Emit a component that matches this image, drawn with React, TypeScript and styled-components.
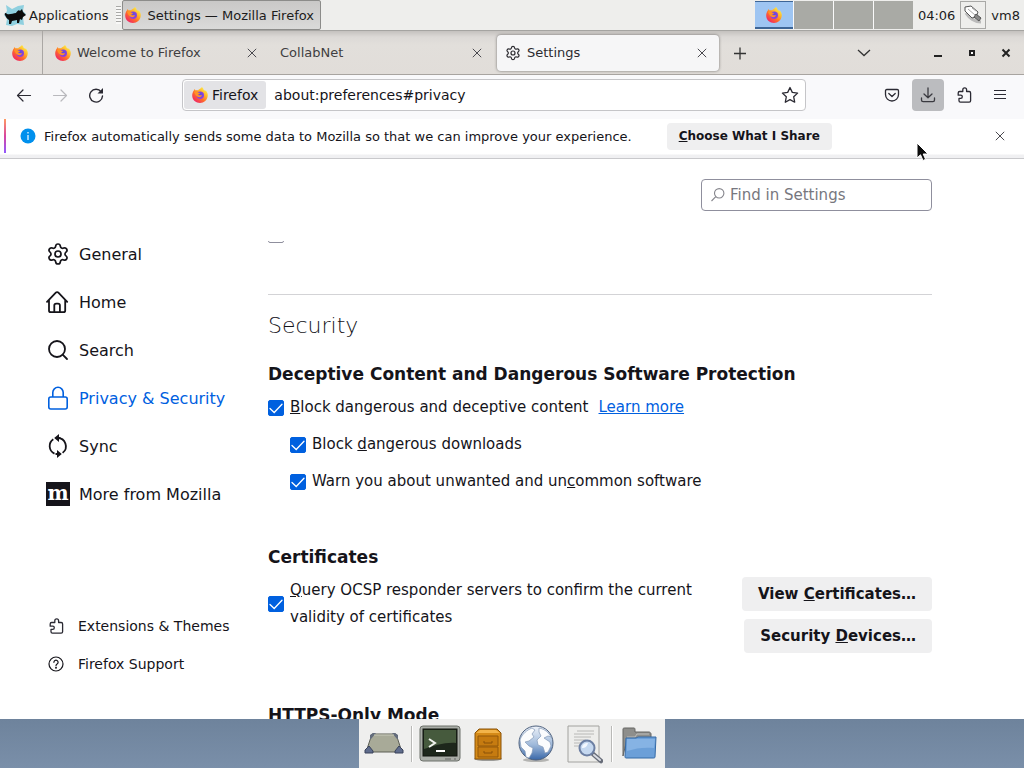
import React from "react";
import styled, { createGlobalStyle } from "styled-components";
import { Settings, Search } from "lucide-react";

const GlobalStyle = createGlobalStyle`
  *, *::before, *::after { box-sizing: border-box; }
  body {
    margin: 0;
    background: #758ba5;
    color: #15141a;
    font-family: "DejaVu Sans", sans-serif;
    font-size: 15px;
  }
  button, input { font-family: inherit; color: inherit; margin: 0; }
  button { border: 0; padding: 0; background: none; }
  svg { display: block; flex: none; }
  h1, h2 { margin: 0; }
`;

/* ---------- desktop ---------- */

const Desktop = styled.div`
  display: flex;
  flex-direction: column;
  height: 100vh;
  overflow: hidden;
`;

const Panel = styled.header`
  display: flex;
  align-items: center;
  height: 31px;
  flex: none;
  padding: 0 4px;
  background: #eeeeec;
  border-bottom: 1px solid #a5a4a1;
  font-size: 13px;
  color: #1c1c1c;
`;

const MenuButton = styled.button`
  display: flex;
  align-items: center;
  gap: 2px;
  font-size: 13px;
`;

const Grip = styled.span`
  width: 5px;
  height: 18px;
  margin: 0 1px 0 8px;
  background: repeating-linear-gradient(#a9a9a7 0 1px, #f8f8f7 1px 3px);
`;

const TaskButton = styled.button`
  display: flex;
  align-items: center;
  gap: 6px;
  height: 30px;
  padding: 0 6px 0 2px;
  background: linear-gradient(#c9c8c7, #dadad9);
  border: 1px solid #8c8c8a;
  border-radius: 2px;
  font-size: 13px;
`;

const Pager = styled.div`
  display: flex;
  gap: 1px;
  margin-left: auto;
  background: #fafafa;
  height: 28px;
`;

const Workspace = styled.button<{ $current?: boolean }>`
  display: grid;
  place-items: center;
  width: ${(p) => (p.$current ? 38 : 39)}px;
  background: ${(p) => (p.$current ? "#9ec5f2" : "#a9aaa5")};
  border-bottom: ${(p) => (p.$current ? "2px solid #3d6596" : "0")};
  border-top: ${(p) => (p.$current ? "1px solid #3d6596" : "0")};
`;

const Clock = styled.time`
  margin: 0 5px;
`;

const TrayButton = styled.button`
  display: grid;
  place-items: center;
  width: 26px;
  height: 28px;
  margin-right: 5px;
  border: 1px solid #a9a9a7;
`;

/* ---------- browser window ---------- */

const Window = styled.main`
  display: flex;
  flex-direction: column;
  flex: 1;
  min-height: 0;
  background: #fff;
`;

const TabBar = styled.div`
  display: flex;
  align-items: center;
  height: 44px;
  flex: none;
  background: linear-gradient(#c4c1be, #dcd9d6 6px, #e2dfdb 14px, #e1ddd9);
  border-bottom: 1px solid #a8a4a0;
`;

const PinnedTab = styled.button`
  display: grid;
  place-items: center;
  align-self: stretch;
  width: 43px;
  padding-right: 3px;
  margin-right: 3px;
  border-right: 1px solid #aaa7a4;
`;

const Tab = styled.div<{ $active?: boolean }>`
  display: flex;
  align-items: center;
  gap: 6px;
  width: 222px;
  height: 36px;
  margin: 0 2px 0 1px;
  padding: 0 7px 0 8px;
  border-radius: 4px;
  font-size: 13px;
  color: ${(p) => (p.$active ? "#2c2b30" : "#403e41")};
  background: ${(p) => (p.$active ? "#f6f6f7" : "none")};
  box-shadow: ${(p) => (p.$active ? "0 0 3px rgba(0, 0, 0, 0.5)" : "none")};
`;

const TabTitle = styled.span`
  flex: 1;
`;

const IconButton = styled.button<{ $size?: number; $pressed?: boolean }>`
  display: grid;
  place-items: center;
  width: ${(p) => p.$size ?? 32}px;
  height: ${(p) => p.$size ?? 32}px;
  border-radius: 4px;
  background: ${(p) => (p.$pressed ? "#bbbcbf" : "none")};
`;

const WindowControls = styled.div`
  display: flex;
  gap: 2px;
  margin-left: auto;
  padding-right: 2px;
`;

const TabListButton = styled(IconButton)`
  margin-right: 40px;
`;

const Toolbar = styled.div`
  display: flex;
  align-items: center;
  height: 42px;
  flex: none;
  padding: 0 8px 2px;
  background: #f9f9fb;
`;

const ButtonGroup = styled.div`
  display: flex;
  gap: 4px;
`;

const UrlBar = styled.div`
  display: flex;
  align-items: center;
  flex: 1;
  max-width: 624px;
  height: 32px;
  margin: 0 auto 0 70px;
  background: #fff;
  border: 1px solid #c5c5c8;
  border-radius: 4px;
`;

const Identity = styled.button`
  display: flex;
  align-items: center;
  gap: 4px;
  height: 28px;
  margin-left: 1px;
  padding: 0 8px;
  border-radius: 3px;
  background: #e3e3e6;
  font-size: 14px;
`;

const Address = styled.input`
  flex: 1;
  min-width: 0;
  padding: 0 8px;
  border: 0;
  outline: 0;
  background: none;
  font-size: 14px;
`;

const Notice = styled.div`
  display: flex;
  align-items: center;
  height: 42px;
  flex: none;
  padding: 2px 8px 5px 4px;
  background: linear-gradient(#f9f9fb 2px, #fff 2px 37px, #f0f0f2 38px);
  border-bottom: 1px solid #c9c9cc;
  font-size: 13px;
`;

const NoticeStripe = styled.span`
  align-self: stretch;
  width: 2px;
  margin-right: 14px;
  background: linear-gradient(#ff9a62, #d8459f 50%, #9059ff);
`;

const NoticeText = styled.span`
  margin: 0 35px 0 8px;
`;

const NoticeButton = styled.button`
  height: 27px;
  padding: 0 12px;
  border-radius: 4px;
  background: #efeff0;
  font-size: 12px;
  font-weight: 700;
`;

const NoticeClose = styled(IconButton)`
  margin-left: auto;
`;

/* ---------- preferences page ---------- */

const Page = styled.div`
  display: flex;
  flex: 1;
  min-height: 0;
`;

const Sidebar = styled.nav`
  display: flex;
  flex-direction: column;
  width: 268px;
  flex: none;
  padding: 71px 0 36px 46px;
`;

const Category = styled.a<{ $selected?: boolean }>`
  display: flex;
  align-items: center;
  gap: 9px;
  height: 48px;
  font-size: 16px;
  text-decoration: none;
  color: ${(p) => (p.$selected ? "#0060df" : "#15141a")};
`;

const FooterLinks = styled.div`
  margin-top: auto;
  padding-left: 2px;
`;

const FooterLink = styled.a`
  display: flex;
  align-items: center;
  gap: 14px;
  height: 38px;
  font-size: 14px;
  text-decoration: none;
  color: #15141a;
`;

const Pane = styled.div`
  display: flex;
  flex-direction: column;
  flex: 1;
  max-width: 664px;
`;

const SearchBox = styled.label`
  display: flex;
  align-items: center;
  align-self: flex-end;
  gap: 4px;
  width: 231px;
  height: 32px;
  flex: none;
  margin: 20px 0 30px;
  padding: 0 8px;
  border: 1px solid #8f8f9d;
  border-radius: 4px;
  color: #7d7d85;
`;

const SearchInput = styled.input`
  flex: 1;
  min-width: 0;
  padding: 0;
  border: 0;
  outline: 0;
  background: none;
  font-size: 15px;
  &::placeholder { color: #77777e; opacity: 1; }
`;

const Scroller = styled.div`
  flex: 1;
  min-height: 0;
  overflow: hidden;
`;

const EarlierSection = styled.div`
  margin-top: -14px;
  padding-bottom: 51px;
  border-bottom: 1px solid #d3d3d6;
`;

const SectionTitle = styled.h1`
  margin: 16px 0 21px;
  font-size: 22px;
  line-height: 30px;
  font-weight: 200;
`;

const Group = styled.section`
  margin-bottom: 50px;
`;

const GroupTitle = styled.h2`
  margin-bottom: 8px;
  font-size: 17px;
  line-height: 24px;
  font-weight: 700;
`;

const Options = styled.div`
  display: flex;
  flex-direction: column;
  gap: 10px;
`;

const OptionRow = styled.div<{ $nested?: boolean }>`
  display: flex;
  align-items: center;
  gap: 10px;
  padding-left: ${(p) => (p.$nested ? 22 : 0)}px;
  line-height: 27px;
`;

const CheckLabel = styled.label`
  display: flex;
  align-items: center;
  gap: 6px;
`;

const CheckBoxCell = styled.span`
  display: grid;
  flex: none;
  & > * { grid-area: 1 / 1; }
  & > svg { pointer-events: none; }
`;

const CheckBox = styled.input`
  appearance: none;
  width: 16px;
  height: 16px;
  border: 1px solid #8f8f9d;
  border-radius: 2px;
  background: #fff;
  &:checked { background: #0060df; border-color: #0060df; }
`;

const Link = styled.a`
  color: #0060df;
`;

const Split = styled.div`
  display: flex;
  align-items: flex-start;
  justify-content: space-between;
  gap: 32px;
`;

const ButtonStack = styled.div`
  display: flex;
  flex-direction: column;
  align-items: flex-end;
  gap: 8px;
  flex: none;
`;

const PrefButton = styled.button`
  height: 34px;
  padding: 0 16px;
  border-radius: 4px;
  background: #efeff0;
  font-size: 15px;
  font-weight: 700;
`;

/* ---------- dock ---------- */

const DockBar = styled.footer`
  display: flex;
  justify-content: center;
  height: 49px;
  flex: none;
  background: linear-gradient(#6e839c, #7a8fa9);
`;

const Dock = styled.div`
  display: flex;
  align-items: center;
  padding: 0 1px;
  background: #efefee;
`;

const DockItem = styled.button`
  display: grid;
  place-items: center;
  width: 48px;
  height: 48px;
`;

const DockSeparator = styled.span`
  width: 2px;
  height: 36px;
  margin: 0 3px;
  border-left: 1px solid #b9b9b7;
  border-right: 1px solid #fff;
`;

const Pointer = styled.svg`
  position: absolute;
  left: 916px;
  top: 142px;
  pointer-events: none;
`;

/* ---------- icons ---------- */

const Fox = ({ size = 16 }: { size?: number }) => (
  <svg width={size} height={size} viewBox="0 0 32 32">
    <defs>
      <linearGradient id="foxBody" x1="0.85" y1="0.1" x2="0.15" y2="0.95">
        <stop offset="0" stopColor="#fff14a" />
        <stop offset="0.3" stopColor="#ffb62a" />
        <stop offset="0.6" stopColor="#ff6a2b" />
        <stop offset="1" stopColor="#ee1f6c" />
      </linearGradient>
      <radialGradient id="foxGlobe" cx="0.5" cy="0.4" r="0.6">
        <stop offset="0" stopColor="#5b4de0" />
        <stop offset="1" stopColor="#9a3fd8" />
      </radialGradient>
    </defs>
    <path
      d="M20 0c2 2 3 4 3.500 6C27 8 28 7 28.500 8c2 3 3.500 6 3 9.500C30.800 26 24 32 16 32S.6 26 .4 17.500C.3 13 2 9 4 6.500L5 4l2.500 3c1.500-.5 3-.5 4.500-.2C14 4 17 4 18 2z"
      fill="url(#foxBody)"
    />
    <circle cx="16.500" cy="16.500" r="7.500" fill="url(#foxGlobe)" />
    <path d="M4 10c3-3 7-3 9-2.500-1.500 1-2 2.500-1.500 3.500l4.500.8c0 2-3 2.200-3.800 3.500 2.300 2.800 6 .5 8 1.200-1 3-5 4.500-8 3.500-4-1-6-5-8.200-10z" fill="#ff9226" />
  </svg>
);

const Close = ({ size = 10 }: { size?: number }) => (
  <svg width={size} height={size} viewBox="0 0 10 10" fill="none" stroke="#4a494f" strokeWidth="1">
    <path d="M.8.8l8.400 8.400M9.200.8L.8 9.200" />
  </svg>
);

const Mouse = () => (
  <svg width="23" height="23" viewBox="0 0 23 23">
    <path d="M2 1l6 4 6-3 6-1-1 6 3 3-3 3 1 8-7-1-5 2-6-1 1-6-3-4 3-4z" fill="#8fd0df" />
    <path d="M1 11c-1-2 1-3 2-1 3 1 6-1 9-1 1-2 3-4 4-2l2-2 1 3 3 3-3 2-1 3-2-1-1 4h-2v-3l-5 1-1 3H5v-4c-2-1-3-3-4-5z" fill="#0b0b0b" />
  </svg>
);

const Cable = () => (
  <svg width="20" height="20" viewBox="0 0 20 20" fill="#fff" stroke="#555" strokeWidth="1">
    <path d="M3 8c3 5 9 9 15 9" fill="none" stroke="#bbb" strokeWidth="3" />
    <path d="M2 2l6-1 7 6-2 5-4 1-7-7z" />
    <path d="M13 9l5 4-2 3-5-4z" fill="#888" />
    <path d="M5 4l7 6M9 3l4 3" stroke="#aaa" />
  </svg>
);

const Back = () => (
  <svg width="16" height="16" viewBox="0 0 16 16" fill="none" stroke="#2b2a33" strokeWidth="1.200" strokeLinecap="round" strokeLinejoin="round">
    <path d="M14.500 8.500H1.500M7 3L1.500 8.500 7 14" />
  </svg>
);

const Forward = () => (
  <svg width="16" height="16" viewBox="0 0 16 16" fill="none" stroke="#b9b9bd" strokeWidth="1.200" strokeLinecap="round" strokeLinejoin="round">
    <path d="M1.500 8.500h13M9 3l5.500 5.500L9 14" />
  </svg>
);

const Reload = () => (
  <svg width="16" height="16" viewBox="0 0 16 16" fill="none" stroke="#2b2a33" strokeWidth="1.400" strokeLinecap="round">
    <path d="M13.200 4.800A6.400 6.400 0 1 0 14.500 9" />
    <path d="M15 1v5.500H9.500z" fill="#2b2a33" stroke="none" />
  </svg>
);

const Star = () => (
  <svg width="18" height="18" viewBox="0 0 18 18" fill="none" stroke="#2b2a33" strokeWidth="1.300" strokeLinejoin="round">
    <path d="M9 1.500l2.300 4.900 5.300.7-3.900 3.700 1 5.400L9 13.600l-4.700 2.600 1-5.400-3.900-3.700 5.300-.7z" />
  </svg>
);

const Pocket = () => (
  <svg width="16" height="16" viewBox="0 0 16 16" fill="none" stroke="#2b2a33" strokeWidth="1.300" strokeLinecap="round" strokeLinejoin="round">
    <path d="M2.800 2.500h10.400c.8 0 1.300.5 1.300 1.300V7.500a6.500 6.500 0 0 1-13 0V3.800c0-.8.500-1.300 1.300-1.300z" />
    <path d="M4.800 6.500L8 9.500l3.200-3" />
  </svg>
);

const Download = () => (
  <svg width="16" height="16" viewBox="0 0 16 16" fill="none" stroke="#3a3a40" strokeWidth="1.300" strokeLinecap="round" strokeLinejoin="round">
    <path d="M8 1v9.500M4 7l4 3.800L12 7M1.500 11v2c0 1 .6 1.600 1.600 1.600h9.800c1 0 1.600-.6 1.600-1.600v-2" />
  </svg>
);

const Puzzle = () => (
  <svg width="16" height="16" viewBox="0 0 16 16" fill="none" stroke="#2b2a33" strokeWidth="1.300" strokeLinejoin="round">
    <path d="M6.800 4.500V2.700a1.900 1.900 0 0 1 3.800 0v1.800h2.600c.9 0 1.400.5 1.400 1.400v7.800c0 .9-.5 1.400-1.400 1.400H4.400c-.9 0-1.400-.5-1.400-1.400v-2.300h1.700a1.600 1.600 0 0 0 0-3.200H2.200V5.900c0-.9.500-1.400 1.400-1.400z" />
  </svg>
);

const Burger = () => (
  <svg width="14" height="14" viewBox="0 0 14 14" stroke="#2b2a33" strokeWidth="1.200">
    <path d="M1 2.500h12M1 6.500h12M1 10.500h12" />
  </svg>
);

const HomeIcon = () => (
  <svg width="24" height="24" viewBox="0 0 24 24" fill="none" stroke="#15141a" strokeWidth="1.800" strokeLinecap="round" strokeLinejoin="round">
    <path d="M1 11.800L9.800 2.600a1.800 1.800 0 0 1 2.600 0L21.200 11.800M3 10v10.500c0 1 .7 1.700 1.700 1.700h12.800c1 0 1.700-.7 1.700-1.700V10" />
    <path d="M8.300 22v-6.500c0-1.200.7-1.900 1.900-1.900h1.800c1.200 0 1.900.7 1.900 1.900V22" />
  </svg>
);

const LockIcon = () => (
  <svg width="24" height="24" viewBox="0 0 24 24" fill="none" stroke="#0060df" strokeWidth="1.600">
    <rect x="2.800" y="11" width="18.400" height="12" rx="2" />
    <path d="M6.800 11V6.500a5.200 5.200 0 0 1 10.400 0V11" />
  </svg>
);

const SyncIcon = () => (
  <svg width="24" height="24" viewBox="0 0 24 24" fill="none" stroke="#15141a" strokeWidth="1.800">
    <path d="M7.300 5.200A8.300 8.300 0 0 0 8.500 19.600M11.500 4A8.300 8.300 0 0 1 16.600 18.900" />
    <path d="M13 0v8L8.200 4zM11 16v8l4.800-4z" fill="#15141a" stroke="none" />
    <path d="M11 20H9.500M13 4h1.500" />
  </svg>
);

const MozillaIcon = () => (
  <svg width="24" height="24" viewBox="0 0 24 24">
    <rect width="24" height="24" fill="#15141a" />
    <text x="12" y="18" textAnchor="middle" fontFamily="DejaVu Serif, serif" fontWeight="700" fontSize="20" fill="#fff">m</text>
  </svg>
);

const HelpIcon = () => (
  <svg width="16" height="16" viewBox="0 0 16 16" fill="none" stroke="#15141a" strokeWidth="1.200" strokeLinecap="round">
    <circle cx="8" cy="8" r="7" />
    <path d="M5.900 6.300a2.100 2.100 0 1 1 3.200 1.800c-.8.5-1.100.8-1.100 1.600" />
    <circle cx="8" cy="11.800" r=".4" fill="#15141a" />
  </svg>
);

const InfoIcon = () => (
  <svg width="16" height="16" viewBox="0 0 16 16">
    <circle cx="8" cy="8" r="7.500" fill="#0090ed" />
    <path d="M8 4v1.500M8 7v5" stroke="#d5efff" strokeWidth="1.400" />
  </svg>
);

const FindIcon = () => (
  <svg width="16" height="16" viewBox="0 0 16 16" fill="none" stroke="#85858c" strokeWidth="1.100">
    <circle cx="9.200" cy="6.300" r="4.700" />
    <path d="M5.800 9.700L1.500 14" />
  </svg>
);

const ShowDesktopIcon = () => (
  <svg width="40" height="24" viewBox="0 0 40 24">
    <path d="M8 2h24l6 18H2z" fill="#a8aa98" stroke="#5c5e55" />
    <path d="M6 7V3l3-2h3l-5 6zM34 7V3l-3-2h-3l5 6z" fill="#636c7c" />
    <path d="M1 21v-3l4-4 4 5v2zM39 21v-3l-4-4-4 5v2z" fill="#5f6c8c" stroke="#3a435a" />
    <path d="M10 3h20" fill="none" stroke="#c8cabb" />
  </svg>
);

const TerminalIcon = () => (
  <svg width="42" height="38" viewBox="0 0 42 38">
    <rect x="1" y="1" width="40" height="35" rx="3" fill="#a9ada7" stroke="#6d716b" />
    <rect x="4" y="4" width="34" height="27" fill="#1d271b" stroke="#10150f" />
    <path d="M5 5h32v13C26 17 15 21 5 24z" fill="#465a3d" />
    <path d="M10 14l6 4-6 4" fill="none" stroke="#f2f4ef" strokeWidth="2" />
    <path d="M17 26h9" stroke="#fff" strokeWidth="2" />
    <path d="M26 34h6M35 34h2" stroke="#666" />
  </svg>
);

const CabinetIcon = () => (
  <svg width="30" height="36" viewBox="0 0 30 36">
    <ellipse cx="15" cy="33" rx="14" ry="2" fill="#9b9b98" />
    <path d="M2 7l4-4h18l4 4v26H2z" fill="#d58a17" stroke="#8a5208" />
    <path d="M3 7l4-3h16l4 3z" fill="#f2b44a" />
    <path d="M5 10h20v10H5zM5 21h20v10H5z" fill="#c67b10" stroke="#93590b" />
    <path d="M11 15v2h8v-2M11 25v2h8v-2" fill="none" stroke="#8a5208" />
  </svg>
);

const GlobeIcon = () => (
  <svg width="38" height="38" viewBox="0 0 38 38">
    <defs>
      <linearGradient id="sea" x1="0" y1="0" x2="0" y2="1">
        <stop offset="0" stopColor="#f0f4fa" />
        <stop offset="0.550" stopColor="#9fb9da" />
        <stop offset="1" stopColor="#3867a8" />
      </linearGradient>
    </defs>
    <ellipse cx="19" cy="35" rx="13" ry="2" fill="#b4b4b2" />
    <circle cx="19" cy="18" r="17" fill="url(#sea)" stroke="#4c5f7c" />
    <path d="M3 15c2-6 7-10 12-12l3 2-3 4 2 3-5 4-4 1 4 4 4 2-1 5-3 5-3-1-1-6-4-4z" fill="#fbfcfd" stroke="#8499b8" strokeWidth=".7" />
    <path d="M22 3c6 1 10 5 12 9l-3-1-4 2 6 4 1 4-3 6-3 1-2-6-5-2-1-5 4-4-2-4z" fill="#fbfcfd" stroke="#8499b8" strokeWidth=".7" />
  </svg>
);

const FinderIcon = () => (
  <svg width="38" height="40" viewBox="0 0 38 40">
    <path d="M3 2h31v36H3z" fill="#ededeb" stroke="#a2a29f" />
    <path d="M12 7h17M9 10h20M9 13h17M9 16h12M9 19h8M9 22h6" stroke="#b8b8b6" />
    <path d="M28 30l8 7" stroke="#686d79" strokeWidth="4.500" strokeLinecap="round" />
    <path d="M29 31l6 5" stroke="#d9dce3" strokeWidth="2" strokeLinecap="round" />
    <circle cx="22" cy="24" r="7.500" fill="#c5d8f0" stroke="#6c7fa3" strokeWidth="2" />
    <path d="M17 24c0-4 3-5 6-5-1 4-3 5-6 5z" fill="#f3f8ff" />
  </svg>
);

const FolderIcon = () => (
  <svg width="38" height="34" viewBox="0 0 38 34">
    <path d="M2 29V2c0-1 1-1 2-1h9c1 0 1 1 1 2v2h14c1 0 2 1 2 2v5H6z" fill="#8e8e8b" stroke="#656563" />
    <path d="M6 10h8l2-3h12" fill="none" stroke="#bdbdba" />
    <path d="M5 11h10l2-1h18l-1 20c0 1-1 1-2 1H5c-1 0-1-1-1-2z" fill="#6b9fd8" stroke="#356aa6" />
    <path d="M6 12h28l-1 9c-9-1-18 0-27 3z" fill="#86b3e4" />
  </svg>
);

const Check = ({ id, checked = true, children }: { id: string; checked?: boolean; children?: React.ReactNode }) => (
  <CheckLabel htmlFor={id}>
    <CheckBoxCell>
      <CheckBox id={id} type="checkbox" defaultChecked={checked} aria-label={children ? undefined : "Option"} />
      {checked && (
        <svg width="16" height="16" viewBox="0 0 16 16" fill="none" stroke="#fff" strokeWidth="1.300" strokeLinecap="round">
          <path d="M2 8.500l4.200 4L14 4.200" />
        </svg>
      )}
    </CheckBoxCell>
    {children && <span>{children}</span>}
  </CheckLabel>
);

export default function App() {
  return (
    <>
      <GlobalStyle />
      <Desktop>
        <Panel>
          <MenuButton><Mouse />Applications</MenuButton>
          <Grip />
          <TaskButton><Fox />Settings — Mozilla Firefox</TaskButton>
          <Pager>
            <Workspace $current aria-label="Workspace 1"><Fox /></Workspace>
            <Workspace aria-label="Workspace 2" />
            <Workspace aria-label="Workspace 3" />
            <Workspace aria-label="Workspace 4" />
          </Pager>
          <Clock>04:06</Clock>
          <TrayButton aria-label="Network"><Cable /></TrayButton>
          <span>vm8</span>
        </Panel>

        <Window>
          <TabBar>
            <PinnedTab aria-label="Firefox View"><Fox /></PinnedTab>
            <Tab>
              <Fox />
              <TabTitle>Welcome to Firefox</TabTitle>
              <IconButton $size={20} aria-label="Close tab"><Close /></IconButton>
            </Tab>
            <Tab>
              <TabTitle>CollabNet</TabTitle>
              <IconButton $size={20} aria-label="Close tab"><Close /></IconButton>
            </Tab>
            <Tab $active>
              <Settings size={16} strokeWidth={1.8} />
              <TabTitle>Settings</TabTitle>
              <IconButton $size={20} aria-label="Close tab"><Close /></IconButton>
            </Tab>
            <IconButton $size={38} aria-label="New tab">
              <svg width="14" height="14" viewBox="0 0 14 14" stroke="#333" strokeWidth="1.300"><path d="M1 7.500h12M7 1.500v12" /></svg>
            </IconButton>
            <WindowControls>
              <TabListButton aria-label="List all tabs">
                <svg width="14" height="14" viewBox="0 0 14 14" fill="none" stroke="#333" strokeWidth="1.300"><path d="M1 4l6 5.500L13 4" /></svg>
              </TabListButton>
              <IconButton aria-label="Minimize">
                <svg width="10" height="10" viewBox="0 0 10 10"><path d="M1 7h8v2H1z" fill="#222" /></svg>
              </IconButton>
              <IconButton aria-label="Maximize">
                <svg width="8" height="8" viewBox="0 0 8 8"><rect x="2" y="2" width="4" height="4" fill="#fff" stroke="#222" strokeWidth="2" /></svg>
              </IconButton>
              <IconButton aria-label="Close window">
                <svg width="10" height="10" viewBox="0 0 10 10" stroke="#222" strokeWidth="2"><path d="M1.500 1.500l7 7M8.500 1.500l-7 7" /></svg>
              </IconButton>
            </WindowControls>
          </TabBar>

          <Toolbar>
            <ButtonGroup>
              <IconButton aria-label="Back"><Back /></IconButton>
              <IconButton aria-label="Forward"><Forward /></IconButton>
              <IconButton aria-label="Reload"><Reload /></IconButton>
            </ButtonGroup>
            <UrlBar>
              <Identity><Fox />Firefox</Identity>
              <Address aria-label="Address" defaultValue="about:preferences#privacy" />
              <IconButton $size={30} aria-label="Bookmark this page"><Star /></IconButton>
            </UrlBar>
            <ButtonGroup>
              <IconButton aria-label="Save to Pocket"><Pocket /></IconButton>
              <IconButton $pressed aria-label="Downloads"><Download /></IconButton>
              <IconButton aria-label="Extensions"><Puzzle /></IconButton>
              <IconButton aria-label="Menu"><Burger /></IconButton>
            </ButtonGroup>
          </Toolbar>

          <Notice>
            <NoticeStripe />
            <InfoIcon />
            <NoticeText>Firefox automatically sends some data to Mozilla so that we can improve your experience.</NoticeText>
            <NoticeButton><u>C</u>hoose What I Share</NoticeButton>
            <NoticeClose aria-label="Dismiss"><Close /></NoticeClose>
          </Notice>

          <Page>
            <Sidebar>
              <Category href="#general"><Settings size={24} strokeWidth={1.7} />General</Category>
              <Category href="#home"><HomeIcon />Home</Category>
              <Category href="#search"><Search size={24} strokeWidth={1.8} />Search</Category>
              <Category href="#privacy" $selected><LockIcon />Privacy &amp; Security</Category>
              <Category href="#sync"><SyncIcon />Sync</Category>
              <Category href="#more"><MozillaIcon />More from Mozilla</Category>
              <FooterLinks>
                <FooterLink href="#extensions"><Puzzle />Extensions &amp; Themes</FooterLink>
                <FooterLink href="#support"><HelpIcon />Firefox Support</FooterLink>
              </FooterLinks>
            </Sidebar>

            <Pane>
              <SearchBox>
                <FindIcon />
                <SearchInput type="text" placeholder="Find in Settings" aria-label="Find in Settings" />
              </SearchBox>
              <Scroller>
                <EarlierSection><Check id="earlier" checked={false} /></EarlierSection>
                <SectionTitle>Security</SectionTitle>

                <Group>
                  <GroupTitle>Deceptive Content and Dangerous Software Protection</GroupTitle>
                  <Options>
                    <OptionRow>
                      <Check id="block"><u>B</u>lock dangerous and deceptive content</Check>
                      <Link href="#learn">Learn more</Link>
                    </OptionRow>
                    <OptionRow $nested>
                      <Check id="downloads">Block <u>d</u>angerous downloads</Check>
                    </OptionRow>
                    <OptionRow $nested>
                      <Check id="uncommon">Warn you about unwanted and un<u>c</u>ommon software</Check>
                    </OptionRow>
                  </Options>
                </Group>

                <Group>
                  <GroupTitle>Certificates</GroupTitle>
                  <Split>
                    <OptionRow>
                      <Check id="ocsp"><u>Q</u>uery OCSP responder servers to confirm the current validity of certificates</Check>
                    </OptionRow>
                    <ButtonStack>
                      <PrefButton>View <u>C</u>ertificates…</PrefButton>
                      <PrefButton>Security <u>D</u>evices…</PrefButton>
                    </ButtonStack>
                  </Split>
                </Group>

                <Group>
                  <GroupTitle>HTTPS-Only Mode</GroupTitle>
                </Group>
              </Scroller>
            </Pane>
          </Page>
        </Window>

        <DockBar>
          <Dock>
            <DockItem aria-label="Show desktop"><ShowDesktopIcon /></DockItem>
            <DockSeparator />
            <DockItem aria-label="Terminal"><TerminalIcon /></DockItem>
            <DockItem aria-label="File manager"><CabinetIcon /></DockItem>
            <DockItem aria-label="Web browser"><GlobeIcon /></DockItem>
            <DockItem aria-label="Application finder"><FinderIcon /></DockItem>
            <DockSeparator />
            <DockItem aria-label="Home folder"><FolderIcon /></DockItem>
          </Dock>
        </DockBar>

        <Pointer width="14" height="20" viewBox="0 0 14 20">
          <path d="M1 1v15l3.500-3.200L7 18.500l2.600-1.200L7.200 12H12z" fill="#0c0c0c" stroke="#fff" strokeWidth="1" />
        </Pointer>
      </Desktop>
    </>
  );
}
